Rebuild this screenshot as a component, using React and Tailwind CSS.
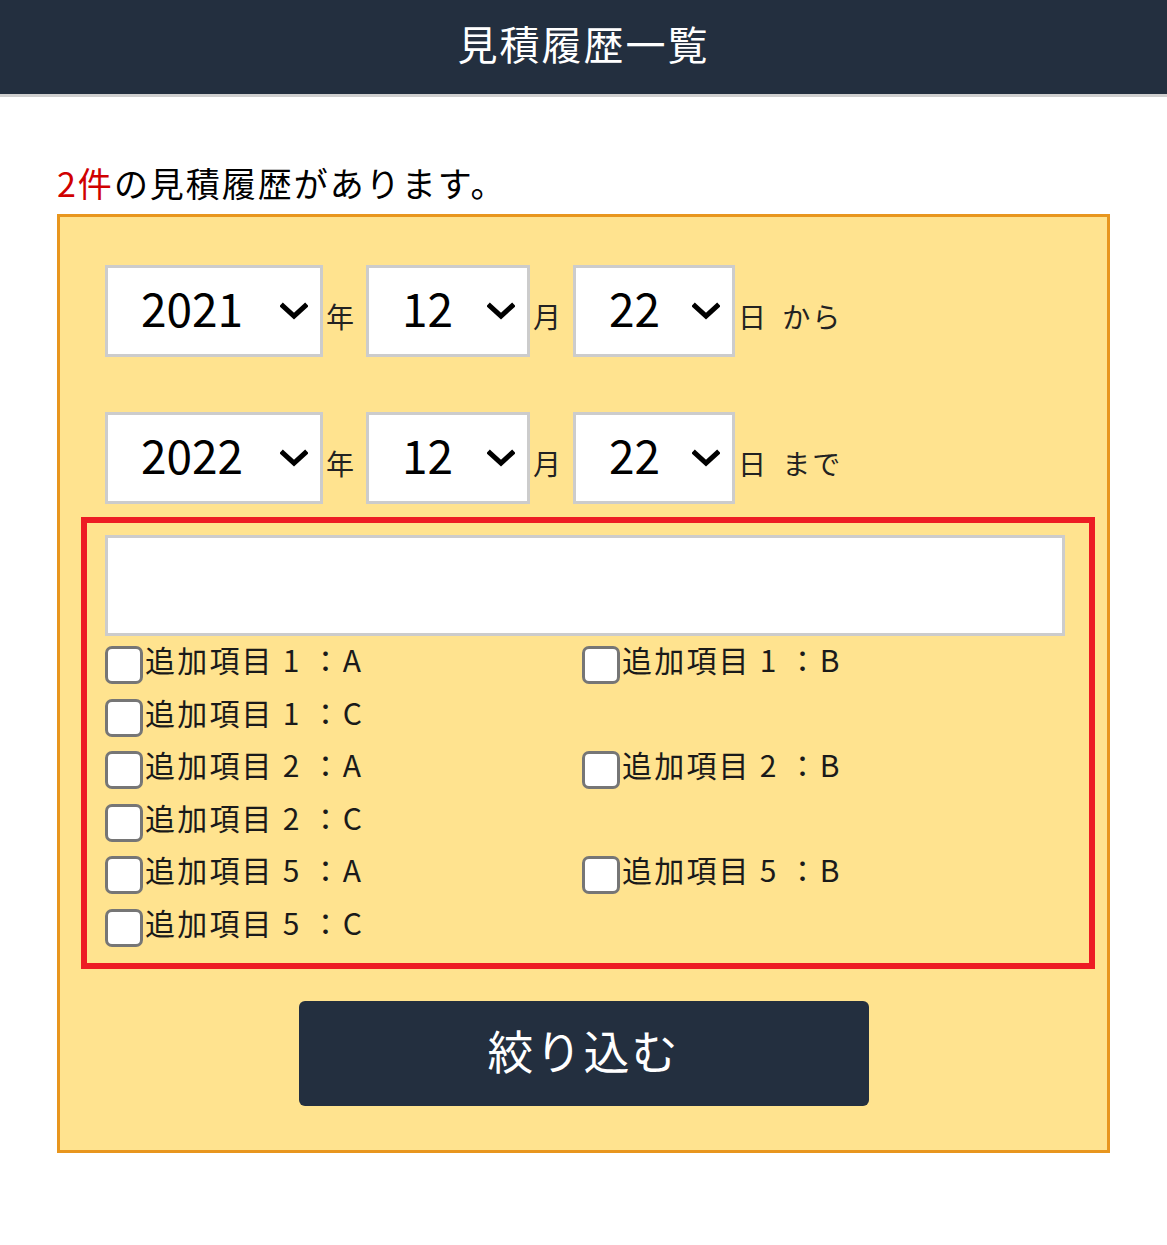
import { useState } from 'react'

const font = { fontFamily: '"Noto Sans CJK JP", "Noto Sans", sans-serif' }

function Chevron() {
  return (
    <svg
      width="28"
      height="20"
      viewBox="0 0 28 20"
      className="pointer-events-none absolute right-[12px] top-1/2 -translate-y-1/2"
    >
      <path d="M3 5 L14 15 L25 5" fill="none" stroke="#000" strokeWidth="5" strokeLinecap="square" />
    </svg>
  )
}

function DateSelect({ value, options, width }) {
  return (
    <div className={`relative h-[92px] border-[3px] border-[#cccccc] bg-white ${width}`}>
      <select
        defaultValue={value}
        className="h-full w-full appearance-none bg-white pb-[8px] pl-[33px] text-[46px] text-black outline-none"
        style={font}
      >
        {options.map((o) => (
          <option key={o}>{o}</option>
        ))}
      </select>
      <Chevron />
    </div>
  )
}

function DateRow({ year, suffix }) {
  const years = ['2020', '2021', '2022', '2023']
  const months = Array.from({ length: 12 }, (_, i) => String(i + 1))
  const days = Array.from({ length: 31 }, (_, i) => String(i + 1))
  return (
    <div className="flex items-center">
      <DateSelect value={year} options={years} width="w-[218px]" />
      <span className="ml-[3px] mr-[12px] pt-[10px] text-[28px] leading-none text-[#222]">年</span>
      <DateSelect value="12" options={months} width="w-[164px]" />
      <span className="ml-[3px] mr-[12px] pt-[10px] text-[28px] leading-none text-[#222]">月</span>
      <DateSelect value="22" options={days} width="w-[162px]" />
      <span className="ml-[3px] pt-[10px] text-[28px] leading-none tracking-[2px] text-[#222] [word-spacing:6px]">
        日 {suffix}
      </span>
    </div>
  )
}

function Check({ label }) {
  const [on, setOn] = useState(false)
  return (
    <label className="flex w-[477px] cursor-pointer items-center">
      <span
        onClick={() => setOn(!on)}
        className={`mt-[12px] h-[38px] w-[38px] shrink-0 rounded-[7px] border-[3px] border-[#767676] ${on ? 'bg-blue-600' : 'bg-white'}`}
      ></span>
      <span className="ml-[2px] text-[30px] leading-[52.5px] tracking-[2.2px] text-[#1a1a1a]">{label}</span>
    </label>
  )
}

export default function App() {
  const groups = ['1', '2', '5']
  return (
    <div className="min-h-screen bg-white" style={font}>
      <header className="flex h-[97px] items-center justify-center border-b-[3px] border-[#cfcfcf] bg-[#232f3f] pb-[8px]">
        <h1 className="text-[40px] font-normal tracking-[2px] text-white">見積履歴一覧</h1>
      </header>

      <div className="px-[57px]">
        <p className="mt-[62px] mb-[7px] text-[34px] leading-[48px] tracking-[2px] text-black">
          <span className="text-[#d00000]">2件</span>の見積履歴があります。
        </p>

        <div className="w-[1053px] border-[3px] border-[#e8961e] bg-[#ffe38f] pt-[48px] pb-[44px]">
          <div className="ml-[45px] flex flex-col gap-[55px]">
            <DateRow year="2021" suffix="から" />
            <DateRow year="2022" suffix="まで" />
          </div>

          <div className="ml-[21px] mt-[13px] w-[1014px] border-[6px] border-[#ed1c24] pl-[18px] pt-[12px] pb-[15px]">
            <input
              type="text"
              className="mb-[-3px] block h-[101px] w-[960px] border-[3px] border-[#cccccc] bg-white px-3 text-[28px] outline-none"
            />
            {groups.map((g) => (
              <div key={g} className="flex flex-wrap">
                <Check label={`追加項目 ${g} ：A`} />
                <Check label={`追加項目 ${g} ：B`} />
                <Check label={`追加項目 ${g} ：C`} />
              </div>
            ))}
          </div>

          <div className="mt-[32px] flex justify-center">
            <button className="h-[105px] w-[570px] rounded-[6px] bg-[#232f3f] pb-[8px] text-[46px] tracking-[2px] text-white">
              絞り込む
            </button>
          </div>
        </div>
      </div>
    </div>
  )
}
